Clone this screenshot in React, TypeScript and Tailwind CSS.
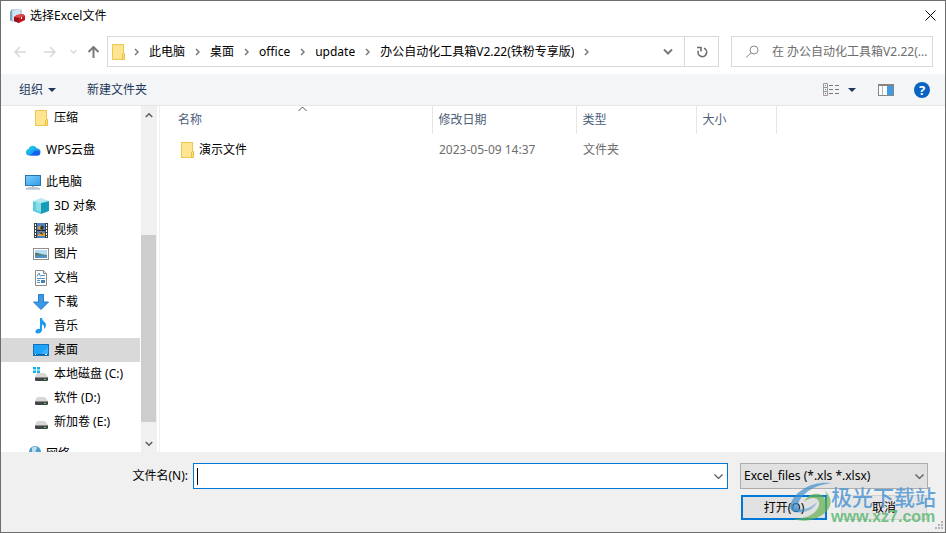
import { useState, Fragment } from "react";
import type { ReactNode } from "react";
import clsx from "clsx";

type IconProps = { className?: string };

type TreeItem = {
  label: string;
  icon: ReactNode;
  level: 0 | 1;
  gapAfter?: boolean;
};

const FolderIcon = ({ className }: IconProps) => (
  <svg className={className} width="14" height="16" viewBox="0 0 14 16" aria-hidden="true">
    <rect x="0.5" y="0.5" width="11" height="15" fill="#ffe591" stroke="#ecc850" />
    <path d="M10.5 15.5v-5l1-1h1v6z" fill="#ffe07a" stroke="#e8bf3e" />
  </svg>
);

const AppIcon = () => (
  <svg width="16" height="16" viewBox="0 0 16 16" aria-hidden="true">
    <path d="M1 4l2-3h8l2 1v9l-7 3-5-1z" fill="#b9d3e5" />
    <path d="M1 4l2-3v12l-2-1z" fill="#7fa6c2" />
    <path d="M4 3l7-2v8l-7 4z" fill="#d3e5f1" />
    <path d="M5 9l3-2 6-1 2 2v4l-6 3-5-2z" fill="#c3161c" />
    <path d="M5 9l3-2 6-1 2 2-6 2z" fill="#df4a48" />
    <path d="M5 9l5 1v5l-5-2z" fill="#98141a" />
    <path d="M12.500 9v2" stroke="#fff" />
  </svg>
);

const CloudIcon = () => (
  <svg width="16" height="16" viewBox="0 0 16 16" aria-hidden="true">
    <defs>
      <linearGradient id="cloud" x1="0" y1="0" x2="1" y2="1">
        <stop offset="0" stopColor="#22e2e6" />
        <stop offset="1" stopColor="#1470f5" />
      </linearGradient>
    </defs>
    <path d="M4 13.500a3.300 3.300 0 0 1-.500-6.500 4.500 4.500 0 0 1 8.500-.500 3.500 3.500 0 0 1 0 7z" fill="url(#cloud)" />
    <path d="M4 13.500c3.500 0 4-5 7.500-5a3 3 0 0 1 3.500 2.500 2.500 2.500 0 0 1-3 2.500z" fill="#1560ee" />
  </svg>
);

const ComputerIcon = () => (
  <svg width="16" height="16" viewBox="0 0 16 16" aria-hidden="true">
    <defs>
      <linearGradient id="screen" x1="0" y1="0" x2="1" y2="1">
        <stop offset="0" stopColor="#7fd0fa" />
        <stop offset="1" stopColor="#2c9bea" />
      </linearGradient>
    </defs>
    <rect x="0.500" y="1.500" width="15" height="10" fill="url(#screen)" stroke="#2672ad" />
    <path d="M7 12h2v1.500H7z" fill="#a8b5c0" />
    <path d="M4 13h8l3 1.500v1H1v-1z" fill="#9aa8b5" />
    <path d="M2 14h12" stroke="#e3eaf0" />
  </svg>
);

const CubeIcon = () => (
  <svg width="16" height="16" viewBox="0 0 16 16" aria-hidden="true">
    <path d="M0 3l8 2v11l-8-3z" fill="#5cccdd" />
    <path d="M0 3l8-3 8 3-8 2z" fill="#b4ebf1" />
    <path d="M8 5l8-2v10l-8 3z" fill="#179db9" />
    <path d="M3 4l5 1v9l-5-2z" fill="#8bdce8" />
  </svg>
);

const VideoIcon = () => (
  <svg width="16" height="16" viewBox="0 0 16 16" aria-hidden="true">
    <rect x="1" y="1" width="14" height="15" fill="#3d3d3d" />
    <rect x="4" y="1" width="8" height="15" fill="#4e7fd1" />
    <path d="M2.500 2v13M13.500 2v13" stroke="#fff" strokeDasharray="2 1" />
    <path d="M4 6l4-3 3 4-3 1zM5 13l3-4 4 3v2H5z" fill="#e6a52d" />
    <path d="M8 3l3 2-1 3-3-1zM6 11l3-1 1 3z" fill="#25383f" />
    <path d="M4 8.500h8" stroke="#222" />
  </svg>
);

const PictureIcon = () => (
  <svg width="16" height="16" viewBox="0 0 16 16" aria-hidden="true">
    <rect x="0.500" y="2.500" width="15" height="11" fill="#fff" stroke="#8e8e8e" />
    <rect x="2" y="4" width="12" height="8" fill="#b5dbf5" />
    <path d="M2 7c3-1 5 2 12 2v1H2z" fill="#4f7f75" />
    <path d="M2 9.500h12V12H2z" fill="#5590c4" />
  </svg>
);

const DocumentIcon = () => (
  <svg width="16" height="16" viewBox="0 0 16 16" aria-hidden="true">
    <path d="M2.500.500h8l3 3v12h-11z" fill="#fff" stroke="#8b8b8b" />
    <path d="M10.500.500v3h3" fill="#e6e6e6" stroke="#8b8b8b" />
    <path d="M4 6.500l2-3.500 1.500 3.500M8 5.500h4M4 8.500h8M4 10.500h3M4 12.500h3" fill="none" stroke="#4f93c7" />
    <rect x="8" y="10" width="4" height="3" fill="#3f83bb" />
  </svg>
);

const DownloadIcon = () => (
  <svg width="16" height="16" viewBox="0 0 16 16" aria-hidden="true">
    <path d="M5.500.500h5v7.500h5L8 15.500.500 8h5z" fill="#3b97e8" stroke="#2a7cc9" />
  </svg>
);

const MusicIcon = () => (
  <svg width="16" height="16" viewBox="0 0 16 16" aria-hidden="true">
    <path d="M7 0h2c0 3 4 4 4 7 0 2-1 3-2 4 .500-3-.500-4-2-4.500V12c0 2-2 3.500-4.500 3.500-1.500 0-2-1-2-2C2.500 11.500 5 10.500 7 11z" fill="#1c9af0" />
  </svg>
);

const DesktopIcon = () => (
  <svg width="16" height="16" viewBox="0 0 16 16" aria-hidden="true">
    <rect x="0.500" y="2.500" width="15" height="11" fill="#1ea3fa" stroke="#1272b8" />
    <path d="M8 12L15 5v7z" fill="#3bb2ff" />
    <path d="M1 12.500h14" stroke="#0d5f9f" />
    <path d="M2 12.500h1M12 12.500h2" stroke="#d5efff" />
  </svg>
);

const DriveIcon = ({ system }: { system?: boolean }) => (
  <svg width="16" height="16" viewBox="0 0 16 16" aria-hidden="true">
    <path d="M4 7h8l3 4H2z" fill="#d7d7d7" />
    <rect x="2" y="11" width="13" height="4" rx="1" fill="#454545" />
    <path d="M2 11.500h13" stroke="#8a8a8a" />
    <path d="M11 13.500h2" stroke="#3ddc5c" />
    {system && <path d="M0 1h3v2.500H0zM4 1h3v2.500H4zM0 4.500h3V7H0zM4 4.500h3V7H4z" fill="#10b4ee" />}
  </svg>
);

const NetworkIcon = () => (
  <svg width="16" height="16" viewBox="0 0 16 16" aria-hidden="true">
    <circle cx="10" cy="6" r="6" fill="#4b9ccb" />
    <path d="M7 2c2-2 5-1 5 0s-2 2-1 4-4 1-4-1z" fill="#b9dff0" />
    <rect x="1" y="8" width="9" height="6" fill="#3d8fd0" stroke="#d5e7f4" />
  </svg>
);

const Chevron = ({ className }: IconProps) => (
  <svg className={className} width="9" height="9" viewBox="0 0 9 9" fill="none" stroke="currentColor" aria-hidden="true">
    <path d="M0.500 2.500l4 4 4-4" strokeWidth="1.200" />
  </svg>
);

const BoldChevron = ({ className }: IconProps) => (
  <svg className={className} width="10" height="8" viewBox="0 0 10 8" fill="none" stroke="currentColor" aria-hidden="true">
    <path d="M1 1.500l4 4 4-4" strokeWidth="2" />
  </svg>
);

const Separator = () => (
  <svg className="mx-[10px] shrink-0 text-[#7a7a7a]" width="5" height="8" viewBox="0 0 5 8" fill="none" stroke="currentColor" aria-hidden="true">
    <path d="M1 1l3 3-3 3" strokeWidth="1.500" />
  </svg>
);

const Triangle = () => (
  <svg width="8" height="4" viewBox="0 0 8 4" aria-hidden="true">
    <path d="M0 0h8L4 4z" fill="#1e395b" />
  </svg>
);

const Arrow = ({ className }: IconProps) => (
  <svg className={className} width="12" height="12" viewBox="0 0 12 12" fill="none" stroke="currentColor" aria-hidden="true">
    <path d="M12 6H1M6 1L1 6l5 5" strokeWidth="1.500" />
  </svg>
);

const Watermark = () => (
  <div className="pointer-events-none absolute right-[9px] bottom-[6px] flex items-center" aria-hidden="true">
    <svg className="mb-1" width="44" height="40" viewBox="0 0 44 40">
      <path d="M43 1C25-1 8 8 3 21c-3 8 3 10 12 8-6-1-6-7-2-13C19 8 29 3 43 1z" fill="#3f8fcc" opacity="0.700" />
      <path d="M36 8c10 8 8 19-2 25-8 6-19 7-29 4 12 0 21-4 25-11 3-6 0-10-5-10-3 0-7 2-9 4 3-6 9-9 14-8 4 0 7 3 7 7 2-4 2-8-1-11z" fill="#62b04f" opacity="0.700" />
      <path d="M3 21c-3 8 4 11 12 9 7-1 12-5 14-10-4 4-9 7-15 7-6 0-9-2-11-6z" fill="#3f8fcc" opacity="0.500" />
    </svg>
    <div className="-ml-px flex flex-col">
      <span className="font-['Noto_Sans_CJK_SC',sans-serif] text-[21px] leading-[26px] font-medium text-[#4d96d3]/85">极光下载站</span>
      <span className="font-['Liberation_Sans',sans-serif] text-[16px] leading-[16px] font-bold text-[#5cb870]/85">www.xz7.com</span>
    </div>
  </div>
);

const path = ["此电脑", "桌面", "office", "update", "办公自动化工具箱V2.22(铁粉专享版)"];

const tree: TreeItem[] = [
  { label: "压缩", icon: <FolderIcon className="ml-[2px]" />, level: 1, gapAfter: true },
  { label: "WPS云盘", icon: <CloudIcon />, level: 0, gapAfter: true },
  { label: "此电脑", icon: <ComputerIcon />, level: 0 },
  { label: "3D 对象", icon: <CubeIcon />, level: 1 },
  { label: "视频", icon: <VideoIcon />, level: 1 },
  { label: "图片", icon: <PictureIcon />, level: 1 },
  { label: "文档", icon: <DocumentIcon />, level: 1 },
  { label: "下载", icon: <DownloadIcon />, level: 1 },
  { label: "音乐", icon: <MusicIcon />, level: 1 },
  { label: "桌面", icon: <DesktopIcon />, level: 1 },
  { label: "本地磁盘 (C:)", icon: <DriveIcon system />, level: 1 },
  { label: "软件 (D:)", icon: <DriveIcon />, level: 1 },
  { label: "新加卷 (E:)", icon: <DriveIcon />, level: 1, gapAfter: true },
  { label: "网络", icon: <NetworkIcon />, level: 0 },
];

const files = [{ name: "演示文件", modified: "2023-05-09 14:37", type: "文件夹", size: "" }];

const AddressBar = () => (
  <div className="mt-[6px] mb-[7px] flex h-[31px] px-3">
    <div className="flex w-[94px] shrink-0 items-center pl-px">
      <button type="button" aria-label="后退" className="text-[#d8d8d8]"><Arrow /></button>
      <button type="button" aria-label="前进" className="ml-[18px] text-[#d8d8d8]"><Arrow className="rotate-180" /></button>
      <button type="button" aria-label="最近浏览的位置" className="ml-[14px] text-[#d8d8d8]">
        <BoldChevron className="w-[7px]" />
      </button>
      <button type="button" aria-label="上移" className="ml-[10px] text-[#7a7a7a]">
        <svg width="13" height="12" viewBox="0 0 13 12" fill="none" stroke="currentColor" strokeWidth="2" aria-hidden="true">
          <path d="M6.500 12V1M1.500 6l5-5 5 5" />
        </svg>
      </button>
    </div>
    <nav aria-label="路径" className="flex min-w-0 flex-1 items-center border border-[#d9d9d9]">
      <FolderIcon className="ml-1 shrink-0" />
      <span className="-ml-[2px] flex min-w-0 flex-1 items-center">
        <Separator />
        {path.map((part) => (
          <Fragment key={part}>
            <button type="button" className="truncate">{part}</button>
            <Separator />
          </Fragment>
        ))}
      </span>
      <button type="button" aria-label="以前的位置" className="mr-[11px] text-[#7a7a7a]"><BoldChevron /></button>
      <button type="button" aria-label="刷新" className="flex h-full w-[34px] shrink-0 items-center justify-center border-l border-[#d9d9d9] text-[#6e6e6e]">
        <svg width="12" height="12" viewBox="0 0 12 12" fill="none" stroke="currentColor" strokeWidth="1.600" aria-hidden="true">
          <path d="M1 1.500h4V5.500M8 2.300A4.300 4.300 0 1 1 2.300 4.800" />
        </svg>
      </button>
    </nav>
    <label className="ml-3 flex w-[202px] shrink-0 items-center border border-[#d9d9d9] pl-[13px]">
      <svg className="shrink-0" width="14" height="14" viewBox="0 0 14 14" fill="none" stroke="#8b8b94" aria-hidden="true">
        <circle cx="9" cy="5" r="4" />
        <path d="M6 8L1 12.500" />
      </svg>
      <input
        type="text"
        aria-label="搜索"
        placeholder="在 办公自动化工具箱V2.22(..."
        className="ml-[13px] w-full min-w-0 outline-none placeholder:text-[#6d6d6d]"
      />
    </label>
  </div>
);

const Toolbar = () => (
  <div className="flex h-8 shrink-0 items-center border-b border-[#e5e6e8] bg-[#f4f5f7] pr-[15px] pl-[18px] text-[#1e395b]">
    <button type="button" className="flex items-center gap-[5px]">组织 <Triangle /></button>
    <button type="button" className="ml-[31px]">新建文件夹</button>
    <button type="button" aria-label="更改视图" className="ml-auto">
      <svg width="17" height="14" viewBox="0 0 17 14" fill="none" aria-hidden="true">
        <path d="M.500.500h4v12h-4zM.500 4.500h4M.500 8.500h4" stroke="#9a9a9a" />
        <path d="M2 2.500h1M2 6.500h1" stroke="#4b82b8" />
        <path d="M2 10.500h1" stroke="#c43b3b" />
        <path d="M6 2.500h4M12 2.500h4M6 6.500h4M12 6.500h4M6 10.500h4M12 10.500h4" stroke="#7a7a7a" />
      </svg>
    </button>
    <button type="button" aria-label="更多选项" className="ml-2"><Triangle /></button>
    <button type="button" aria-label="预览窗格" className="ml-[22px]">
      <svg width="16" height="12" viewBox="0 0 16 12" fill="none" aria-hidden="true">
        <rect x="0.500" y="0.500" width="15" height="11" fill="#fff" stroke="#858585" />
        <path d="M0 1h16" stroke="#858585" strokeWidth="2" />
        <path d="M4.500 2v9" stroke="#b5b5b5" />
        <rect x="9" y="2" width="6" height="9" fill="#3f9be5" />
      </svg>
    </button>
    <button type="button" aria-label="帮助" className="ml-5 flex size-4 items-center justify-center rounded-full bg-[#0a63c2] text-[13px] leading-4 font-bold text-white">?</button>
  </div>
);

const Sidebar = () => {
  const [selected, setSelected] = useState(9);

  return (
    <aside className="flex w-[159px] shrink-0 border-r border-[#f0f0f0]">
      <ul className="w-[140px] overflow-hidden pr-px">
        {tree.map((item, index) => (
          <li key={item.label} className={clsx(item.gapAfter && "mb-2")}>
            <button
              type="button"
              onClick={() => setSelected(index)}
              className={clsx(
                "flex h-6 w-full items-center gap-[5px] text-left whitespace-nowrap",
                item.level === 0 ? "pl-6" : "pl-8",
                selected === index && "bg-[#d9d9d9]"
              )}
            >
              {item.icon}
              {item.label}
            </button>
          </li>
        ))}
      </ul>
      <div className="flex w-4 flex-col bg-[#f0f0f0] text-[#606060]">
        <button type="button" aria-label="向上滚动" className="flex h-[17px] items-center justify-center">
          <BoldChevron className="w-[8px] rotate-180" />
        </button>
        <div className="flex-[112]" />
        <div className="mr-px flex-[187] bg-[#cdcdcd]" />
        <div className="flex-[13]" />
        <button type="button" aria-label="向下滚动" className="flex h-[17px] items-center justify-center">
          <BoldChevron className="w-[8px]" />
        </button>
      </div>
    </aside>
  );
};

const FileTable = () => (
  <main className="min-w-0 flex-1">
    <table className="w-full table-fixed text-left">
      <colgroup>
        <col className="w-[272px]" />
        <col className="w-[144px]" />
        <col className="w-[120px]" />
        <col className="w-[80px]" />
        <col />
      </colgroup>
      <thead>
        <tr className="h-7 text-[#4c607a]">
          <th className="relative border-r border-[#e5e5e5] pl-[18px] font-normal">
            名称
            <svg className="absolute top-0 left-1/2 ml-[2px]" width="9" height="6" viewBox="0 0 9 6" fill="none" stroke="#555" aria-hidden="true">
              <path d="M0.500 5l4-4 4 4" />
            </svg>
          </th>
          <th className="border-r border-[#e5e5e5] pl-[6px] font-normal">修改日期</th>
          <th className="border-r border-[#e5e5e5] pl-[6px] font-normal">类型</th>
          <th className="border-r border-[#e5e5e5] pl-[6px] font-normal">大小</th>
          <td />
        </tr>
      </thead>
      <tbody>
        {files.map((file) => (
          <tr key={file.name} className="text-[#6d6d6d]">
            <td className="pt-2 pl-[21px]">
              <span className="flex items-center gap-1 text-black"><FolderIcon />{file.name}</span>
            </td>
            <td className="pt-2 pl-[7px]">{file.modified}</td>
            <td className="pt-2 pl-[7px]">{file.type}</td>
            <td className="pt-2 pl-[7px]">{file.size}</td>
            <td />
          </tr>
        ))}
      </tbody>
    </table>
  </main>
);

const Footer = () => {
  const [fileName, setFileName] = useState("");

  return (
    <footer className="relative shrink-0 bg-[#f0f0f0] pt-[11px] pr-[17px] pb-3">
      <div className="flex h-[26px] items-center">
        <label htmlFor="file-name" className="w-[192px] shrink-0 pr-[5px] text-right">文件名(N):</label>
        <div className="relative flex h-full min-w-0 flex-1 items-center border border-[#0078d7] bg-white">
          <input
            id="file-name"
            type="text"
            value={fileName}
            onChange={(e) => setFileName(e.target.value)}
            className="h-full min-w-0 flex-1 pl-1 outline-none"
          />
          {!fileName && <span className="pointer-events-none absolute left-[3px] h-[17px] w-px bg-black" />}
          <button type="button" aria-label="文件名列表" className="mr-1 text-[#555]"><Chevron /></button>
        </div>
        <div className="relative ml-3 flex h-full w-[188px] shrink-0 items-center">
          <select aria-label="文件类型" className="h-full w-full appearance-none border border-[#adadad] bg-[#e1e1e1] pl-[3px] outline-none">
            <option>Excel_files (*.xls *.xlsx)</option>
          </select>
          <Chevron className="pointer-events-none absolute right-[4px] text-[#555]" />
        </div>
      </div>
      <div className="mt-[6px] flex justify-end gap-[14px] pr-px">
        <button type="button" className="h-[25px] w-[86px] border-2 border-[#0078d7] bg-[#e1e1e1]">打开(O)</button>
        <button type="button" className="h-[25px] w-[86px] border border-[#cfcfcf] bg-[#e6e6e6]">取消</button>
      </div>
      <Watermark />
      <svg className="absolute right-px bottom-[2px]" width="9" height="9" viewBox="0 0 9 9" fill="#b5b5b5" aria-hidden="true">
        <path d="M6 0h2v2H6zM3 3h2v2H3zM6 3h2v2H6zM0 6h2v2H0zM3 6h2v2H3zM6 6h2v2H6z" />
      </svg>
    </footer>
  );
};

export default function App() {
  return (
    <div className="flex h-screen flex-col overflow-hidden border border-[#6d6d6d] bg-white font-['Noto_Sans','Noto_Sans_CJK_SC',sans-serif] text-[12px] leading-4 text-black">
      <header className="shrink-0">
        <div className="flex h-[29px] items-center pr-[9px] pl-2">
          <AppIcon />
          <h1 className="ml-[5px]">选择Excel文件</h1>
          <button type="button" aria-label="关闭" className="ml-auto">
            <svg width="11" height="11" viewBox="0 0 11 11" stroke="#000" aria-hidden="true">
              <path d="M.500.500l10 10M10.500.500l-10 10" />
            </svg>
          </button>
        </div>
        <AddressBar />
      </header>
      <Toolbar />
      <div className="flex min-h-0 flex-1">
        <Sidebar />
        <FileTable />
      </div>
      <Footer />
    </div>
  );
}
